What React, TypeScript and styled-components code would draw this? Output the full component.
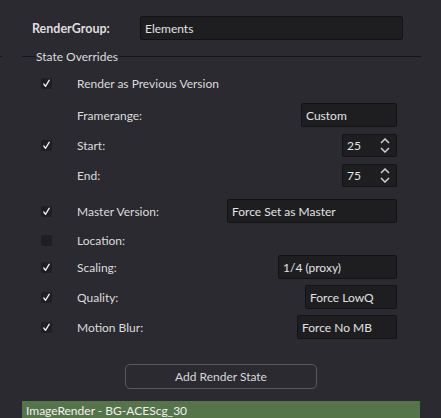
import React from "react";
import styled, { createGlobalStyle } from "styled-components";

const Global = createGlobalStyle`
  html, body { margin: 0; padding: 0; background: #2a2a30; }
  body { font-family: "Lato", "Noto Sans", sans-serif; font-size: 12px; color: #dcdcdc; }
  * { box-sizing: border-box; }
`;

const Page = styled.div`
  width: 441px;
  height: 418px;
  background: #2a2a30;
  overflow: hidden;
  position: relative;
`;

const HeaderRow = styled.div`
  display: flex;
  align-items: center;
  height: 24px;
  margin-top: 16px;
  padding-left: 32px;
`;

const BoldLabel = styled.div`
  width: 108px;
  font-weight: 700;
  font-size: 12.5px;
  color: #dedede;
`;

const Field = styled.div<{ $w?: number }>`
  height: 24px;
  width: ${(p) => (p.$w ? `${p.$w}px` : "auto")};
  flex: ${(p) => (p.$w ? "none" : "1")};
  background: #1e1e21;
  border: 1px solid #131315;
  border-radius: 2px;
  display: flex;
  align-items: center;
  padding-left: 4px;
  color: #e2e2e2;
`;

const HeaderField = styled(Field)`
  margin-right: 38px;
`;

const GroupTitleRow = styled.div`
  display: flex;
  align-items: center;
  height: 16px;
  margin-top: 8px;
`;

const Line = styled.div<{ $w?: number }>`
  height: 1px;
  background: #151517;
  width: ${(p) => (p.$w ? `${p.$w}px` : "auto")};
  flex: ${(p) => (p.$w ? "none" : "1")};
`;

const Gap = styled.div<{ $w: number }>`
  width: ${(p) => p.$w}px;
  flex: none;
`;

const GroupTitle = styled.div`
  padding: 0 1px;
  color: #dcdcdc;
`;

const Rows = styled.div`
  display: flex;
  flex-direction: column;
  padding-left: 41px;
  padding-right: 44px;
`;

const Row = styled.div<{ $top: number }>`
  display: flex;
  align-items: center;
  height: 24px;
  margin-top: ${(p) => p.$top}px;
`;

const Check = styled.div`
  width: 11px;
  height: 11px;
  border-radius: 2px;
  background: #1f1f23;
  flex: none;
  display: flex;
  align-items: center;
  justify-content: center;
`;

const CheckSlot = styled.div`
  width: 36px;
  flex: none;
`;

const Label = styled.div`
  flex: 1;
  color: #dcdcdc;
`;

const Spin = styled(Field)`
  justify-content: space-between;
  padding-right: 6px;
  padding-left: 4px;
  height: 23px;
`;

const Arrows = styled.div`
  display: flex;
  flex-direction: column;
  gap: 3px;
`;

const ButtonRow = styled.div`
  display: flex;
  padding-left: 125px;
  margin-top: 25px;
`;

const Button = styled.div`
  width: 192px;
  height: 25px;
  border: 1px solid #5a5a5e;
  border-radius: 5px;
  background: #2a2a30;
  display: flex;
  align-items: center;
  justify-content: center;
  color: #d8d8d8;
`;

const GreenBar = styled.div`
  margin: 12px 21px 0 22px;
  height: 20px;
  background: #55744a;
  color: #f0f0f0;
  padding-left: 4px;
  padding-bottom: 2px;
  display: flex;
  align-items: center;
  font-size: 12px;
`;

const CheckMark = () => (
  <svg width="9" height="9" viewBox="0 0 9 9">
    <path d="M1.8 5 L3.5 7.3 L7.3 1.2" stroke="#f2f2f2" strokeWidth="1.3" fill="none" strokeLinecap="round" strokeLinejoin="round" />
  </svg>
);

const Chevrons = () => (
  <Arrows>
    <svg width="10" height="6" viewBox="0 0 10 6">
      <path d="M1 5 L5 1 L9 5" stroke="#cfcfcf" strokeWidth="1.5" fill="none" />
    </svg>
    <svg width="10" height="6" viewBox="0 0 10 6">
      <path d="M1 1 L5 5 L9 1" stroke="#cfcfcf" strokeWidth="1.5" fill="none" />
    </svg>
  </Arrows>
);

type RowDef = {
  top: number;
  check: "on" | "off" | "none";
  label: string;
  field?: { text: string; w: number; spin?: boolean };
};

const rows: RowDef[] = [
  { top: 7, check: "on", label: "Render as Previous Version" },
  { top: 8, check: "none", label: "Framerange:", field: { text: "Custom", w: 96 } },
  { top: 6, check: "on", label: "Start:", field: { text: "25", w: 55, spin: true } },
  { top: 6, check: "none", label: "End:", field: { text: "75", w: 55, spin: true } },
  { top: 12, check: "on", label: "Master Version:", field: { text: "Force Set as Master", w: 170 } },
  { top: 5, check: "off", label: "Location:" },
  { top: 3, check: "on", label: "Scaling:", field: { text: "1/4 (proxy)", w: 119 } },
  { top: 6, check: "on", label: "Quality:", field: { text: "Force LowQ", w: 92 } },
  { top: 6, check: "on", label: "Motion Blur:", field: { text: "Force No MB", w: 100 } },
];

export default function App() {
  return (
    <Page>
      <Global />
      <HeaderRow>
        <BoldLabel>RenderGroup:</BoldLabel>
        <HeaderField>Elements</HeaderField>
      </HeaderRow>
      <GroupTitleRow>
        <Line $w={2} />
        <Gap $w={20} />
        <Line $w={13} />
        <GroupTitle>State Overrides</GroupTitle>
        <Line />
        <Gap $w={20} />
      </GroupTitleRow>
      <Rows>
        {rows.map((r) => (
          <Row key={r.label} $top={r.top}>
            <CheckSlot>{r.check !== "none" && <Check>{r.check === "on" && <CheckMark />}</Check>}</CheckSlot>
            <Label>{r.label}</Label>
            {r.field &&
              (r.field.spin ? (
                <Spin $w={r.field.w}>
                  <span>{r.field.text}</span>
                  <Chevrons />
                </Spin>
              ) : (
                <Field $w={r.field.w}>{r.field.text}</Field>
              ))}
          </Row>
        ))}
      </Rows>
      <ButtonRow>
        <Button>Add Render State</Button>
      </ButtonRow>
      <GreenBar>ImageRender - BG-ACEScg_30</GreenBar>
    </Page>
  );
}
